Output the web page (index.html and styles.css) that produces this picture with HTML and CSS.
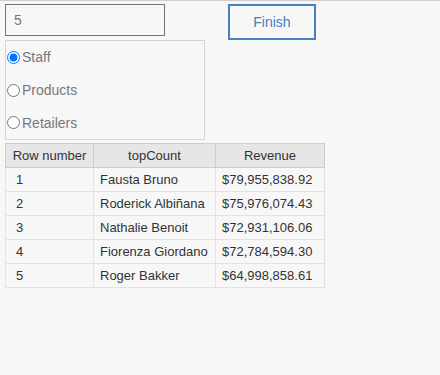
FILE: index.html
```html
<!DOCTYPE html>
<html lang="en">
<head>
  <meta charset="UTF-8">
  <title>Top Count</title>
  <link rel="stylesheet" href="styles.css">
</head>
<body>
  <div class="page">
    <div class="top-row">
      <input type="text" class="count-input" value="5">
      <button type="button" class="finish-btn">Finish</button>
    </div>

    <div class="radio-box">
      <label class="radio-item"><input type="radio" name="kind" checked> Staff</label>
      <label class="radio-item"><input type="radio" name="kind"> Products</label>
      <label class="radio-item"><input type="radio" name="kind"> Retailers</label>
    </div>

    <table class="result">
      <colgroup>
        <col class="c-num">
        <col class="c-name">
        <col class="c-rev">
      </colgroup>
      <thead>
        <tr><th>Row number</th><th>topCount</th><th>Revenue</th></tr>
      </thead>
      <tbody>
        <tr><td class="num">1</td><td>Fausta Bruno</td><td>$79,955,838.92</td></tr>
        <tr><td class="num">2</td><td>Roderick Albiñana</td><td>$75,976,074.43</td></tr>
        <tr><td class="num">3</td><td>Nathalie Benoit</td><td>$72,931,106.06</td></tr>
        <tr><td class="num">4</td><td>Fiorenza Giordano</td><td>$72,784,594.30</td></tr>
        <tr><td class="num">5</td><td>Roger Bakker</td><td>$64,998,858.61</td></tr>
      </tbody>
    </table>
  </div>
</body>
</html>
```

FILE: styles.css
```css
:root {
  --background-color: #f7f7f7;
  --accent-color: #4a7ebf;
  --text-color: #333;
  --muted-color: #777;
  --line-color: #d4d4d4;
  --font-family: 'Liberation Sans', Arial, sans-serif;
}
body {
  margin: 0;
  background-color: var(--background-color);
  font-family: var(--font-family);
  color: var(--text-color);
}
.page {
  border-top: 1px solid #cfcfcf;
  padding: 3px 5px 0;
}
.top-row {
  display: flex;
  align-items: flex-start;
  gap: 63px;
}
.count-input {
  box-sizing: border-box;
  width: 160px;
  height: 32px;
  margin: 0;
  padding: 0 8px;
  border: 1px solid #6e7772;
  background-color: var(--background-color);
  font-family: var(--font-family);
  font-size: 14px;
  color: var(--muted-color);
  outline: none;
}
.finish-btn {
  box-sizing: border-box;
  width: 88px;
  height: 36px;
  margin: 0;
  padding: 0;
  border: 2px solid var(--accent-color);
  background-color: var(--background-color);
  font-family: var(--font-family);
  font-size: 14px;
  color: var(--accent-color);
  cursor: pointer;
}
.radio-box {
  box-sizing: border-box;
  width: 200px;
  height: 100px;
  border: 1px solid var(--line-color);
  display: flex;
  flex-direction: column;
}
.radio-item {
  display: flex;
  align-items: center;
  height: 33px;
  font-size: 14px;
  color: var(--muted-color);
}
.radio-item input {
  margin: 0 2px 0 1px;
  width: 13px;
  height: 13px;
}
.result {
  margin-top: 3px;
  border-collapse: collapse;
  table-layout: fixed;
  width: 319px;
  font-size: 13px;
}
.c-num { width: 88px; }
.c-name { width: 122px; }
.c-rev { width: 109px; }
.result th,
.result td {
  height: 23px;
  padding: 0 6px;
  border: 1px solid #e2e2e2;
  white-space: nowrap;
  overflow: hidden;
  text-align: left;
}
.result th {
  background-color: #e6e6e6;
  border-color: #cdcdcd;
  font-weight: normal;
  text-align: center;
}
.result td.num {
  padding-left: 10px;
}
```
